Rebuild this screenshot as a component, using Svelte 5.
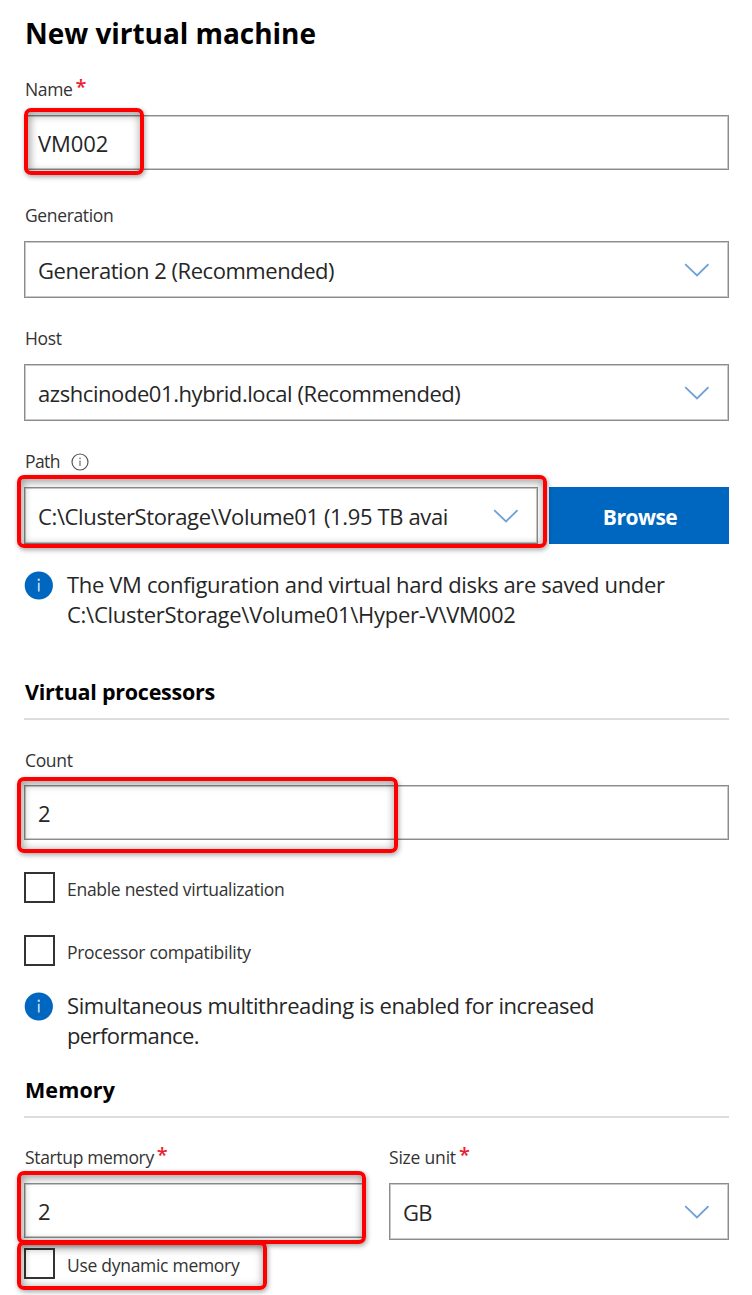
<script>
  let name = 'VM002';
  let host = 'azshcinode01.hybrid.local (Recommended)';
  let path = 'C:\\ClusterStorage\\Volume01 (1.95 TB avai';
  let saved = 'C:\\ClusterStorage\\Volume01\\Hyper-V\\VM002';
</script>

{#snippet chevron()}
  <svg class="chevron" width="26" height="16" viewBox="0 0 26 16"><path d="M2.2 2.2 L14 13.4 L25.5 2.2" fill="none" stroke="#6fa0d8" stroke-width="1.8" /></svg>
{/snippet}

{#snippet info()}
  <svg class="info" width="29" height="29" viewBox="0 0 29 29"><circle cx="14.8" cy="14.5" r="14.1" fill="#0067c0" /><path d="M14.8 11.8V20.5" stroke="#b9d6f0" stroke-width="1.8" /><circle cx="14.8" cy="8.7" r="1.2" fill="#b9d6f0" /></svg>
{/snippet}

<main>
  <h1><span>New virtual machine</span></h1>

  <div class="label name-label"><span>Name</span><b>*</b></div>
  <div class="box input"><span class="name">{name}</span><i class="mark mark-name"></i></div>

  <div class="label gen-label"><span>Generation</span></div>
  <div class="box select"><span class="gen">Generation 2 (Recommended)</span>{@render chevron()}</div>

  <div class="label"><span>Host</span></div>
  <div class="box select"><span class="host">{host}</span>{@render chevron()}</div>

  <div class="label path-label"><span>Path</span>
    <svg class="hint" width="18" height="18" viewBox="0 0 18 18"><circle cx="9" cy="9" r="8" fill="none" stroke="#555" stroke-width="1.2" /><path d="M9 7.6V13" stroke="#777" stroke-width="1.3" /><circle cx="9" cy="5.4" r=".8" fill="#777" /></svg>
  </div>
  <div class="path-row">
    <div class="box select"><span class="path">{path}</span>{@render chevron()}<i class="mark mark-path"></i></div>
    <button>Browse</button>
  </div>

  <div class="note">{@render info()}<p><span class="n1">The VM configuration and virtual hard disks are saved under</span><br /><span class="n2">{saved}</span></p></div>

  <h2 class="vp">Virtual processors</h2>
  <div class="label section-label count-label"><span>Count</span></div>
  <div class="box input"><span>2</span><i class="mark mark-count"></i></div>

  <div class="check first"><i class="tick"></i><span>Enable nested virtualization</span></div>
  <div class="check second"><i class="tick"></i><span>Processor compatibility</span></div>

  <div class="note smt">{@render info()}<p><span class="n3">Simultaneous multithreading is enabled for increased</span><br /><span class="n4">performance.</span></p></div>

  <h2 class="mem">Memory</h2>
  <div class="memory">
    <div>
      <div class="label section-label"><span>Startup memory</span><b>*</b></div>
      <div class="box input"><span>2</span><i class="mark mark-memory"></i></div>
      <div class="check dynamic"><i class="tick"></i><span>Use dynamic memory</span><i class="mark mark-dynamic"></i></div>
    </div>
    <div>
      <div class="label section-label unit-label"><span>Size unit</span><b>*</b></div>
      <div class="box select"><span class="unit">GB</span>{@render chevron()}</div>
    </div>
  </div>
</main>

<style>
  :global(body) { margin: 0; background: #fff; }
  main {
    box-sizing: border-box;
    width: 752px;
    height: 1295px;
    padding: 13px 23px 0 24px;
    overflow: hidden;
    font-family: 'Open Sans', 'Noto Sans', sans-serif;
    font-size: 22px;
    color: #262626;
    background: #fff;
  }
  span { white-space: nowrap; }
  h1, h2, p { margin: 0; }
  h1 { height: 40px; font-size: 28px; line-height: 40px; font-weight: 700; color: #000; letter-spacing: -0.04px; padding-left: 1px; }
  h2 { box-sizing: border-box; height: 43px; line-height: 30px; font-size: 21.5px; font-weight: 700; color: #000; border-bottom: 2px solid #dcdcdc; padding-left: 1px; }
  .vp { margin-top: 46px; letter-spacing: -0.25px; }
  .mem { margin-top: 23px; letter-spacing: 0.1px; }
  .label { box-sizing: border-box; height: 66px; padding: 27px 0 0 1px; display: flex; font-size: 17.5px; line-height: 26px; letter-spacing: -0.36px; color: #333; }
  .label b { font-weight: 600; font-size: 20px; color: #ee1c2e; margin: -2px 0 0 3px; }
  .name-label { height: 62px; padding-top: 23px; }
  .gen-label { height: 71px; padding-top: 32px; }
  .path-label { letter-spacing: -0.6px; }
  .section-label { height: 65px; padding-top: 26px; letter-spacing: -0.34px; }
  .count-label { padding-top: 27px; }
  .unit-label { padding-left: 0; letter-spacing: -0.2px; }
  .hint { margin: 5px 0 0 11px; }
  .box { position: relative; box-sizing: border-box; display: flex; align-items: center; justify-content: space-between; border: 1px solid #8c8c8c; box-shadow: inset 0 0 0 1px #c9c9c9; padding: 0 19px 0 13px; }
  .input { height: 55px; }
  .select { height: 57px; }
  .name { letter-spacing: -0.1px; }
  .gen { letter-spacing: -0.46px; }
  .host { letter-spacing: -0.43px; }
  .path { letter-spacing: -0.37px; }
  .unit { letter-spacing: -0.8px; }
  .n1 { letter-spacing: -0.34px; }
  .n2 { letter-spacing: -0.27px; }
  .n3 { letter-spacing: -0.42px; }
  .n4 { letter-spacing: -0.6px; }
  .path-row { display: grid; grid-template-columns: 514px 180px; gap: 11px; }
  button { border: 0; padding: 2px 0 0 2px; background: #0067c0; color: #fff; font: 700 21px 'Open Sans', sans-serif; letter-spacing: -0.5px; }
  .note { display: flex; gap: 14px; margin-top: 25px; height: 62px; }
  .info { margin-top: 2px; flex: none; }
  .note p { line-height: 30px; }
  .check { position: relative; display: flex; align-items: center; gap: 12px; height: 31px; font-size: 17.5px; letter-spacing: -0.29px; color: #333; }
  .check span { padding-top: 2px; }
  .tick { box-sizing: border-box; width: 31px; height: 31px; border: 2px solid #333; background: #fff; }
  .first { margin-top: 32px; }
  .second { margin-top: 32px; }
  .smt { margin-top: 24px; }
  .memory { display: grid; grid-template-columns: 341px 340px; gap: 24px; }
  .dynamic { margin-top: 10px; }
  .mark { position: absolute; box-sizing: border-box; border: 4px solid #fe0000; border-radius: 7px; box-shadow: 1px 2px 5px rgba(0, 0, 0, .35), inset 1px 2px 8px 1px rgba(0, 0, 0, .38); }
  .mark-name { left: -1px; top: -8px; width: 120px; height: 67px; }
  .mark-path { left: -8px; top: -13px; width: 530px; height: 73px; }
  .mark-count { left: -8px; top: -9px; width: 381px; height: 76px; }
  .mark-memory { left: -8px; top: -13px; width: 349px; height: 73px; }
  .mark-dynamic { left: -7px; top: -7px; width: 250px; height: 49px; }
</style>
